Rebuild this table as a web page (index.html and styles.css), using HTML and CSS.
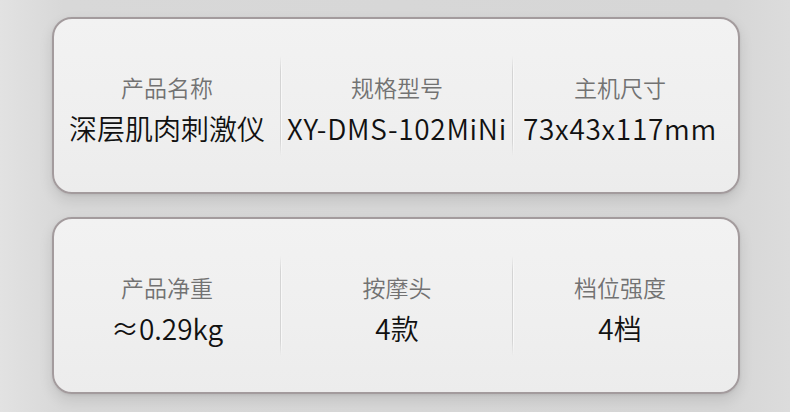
FILE: index.html
```html
<!DOCTYPE html>
<html lang="zh-CN">
<head>
  <meta charset="UTF-8" />
  <meta name="viewport" content="width=device-width, initial-scale=1.0"/>
  <title>产品参数</title>
  <link rel="stylesheet" href="styles.css">
</head>
<body>
  <div class="specs">
    <div class="card">
      <div class="spec">
        <div class="label">产品名称</div>
        <div class="value">深层肌肉刺激仪</div>
      </div>
      <div class="divider"></div>
      <div class="spec">
        <div class="label">规格型号</div>
        <div class="value value-latin">XY-DMS-102MiNi</div>
      </div>
      <div class="divider"></div>
      <div class="spec spec-last">
        <div class="label">主机尺寸</div>
        <div class="value value-latin">73x43x117mm</div>
      </div>
    </div>

    <div class="card">
      <div class="spec">
        <div class="label">产品净重</div>
        <div class="value">≈0.29kg</div>
      </div>
      <div class="divider"></div>
      <div class="spec">
        <div class="label">按摩头</div>
        <div class="value">4款</div>
      </div>
      <div class="divider"></div>
      <div class="spec spec-last">
        <div class="label">档位强度</div>
        <div class="value">4档</div>
      </div>
    </div>
  </div>
</body>
</html>
```

FILE: styles.css
```css
body {
  margin: 0;
  width: 790px;
  height: 412px;
  overflow: hidden;
  font-family: "Noto Sans CJK SC", "Noto Sans", sans-serif;
  background: linear-gradient(90deg, #e2e2e2 0%, #d8d8d8 8%, #d6d6d6 92%, #dcdcdc 100%);
}
.specs {
  padding: 17px 0 0 52px;
  display: flex;
  flex-direction: column;
  gap: 23px;
}
.card {
  width: 684px;
  height: 173px;
  background: linear-gradient(180deg, #f2f2f2 0%, #efefef 60%, #ececec 100%);
  border: 2px solid #a39b9d;
  border-radius: 20px;
  box-shadow: 0 6px 14px rgba(0,0,0,0.10), 0 1px 3px rgba(0,0,0,0.08);
  display: grid;
  grid-template-columns: 226px 2px 230px 2px 1fr;
  align-items: center;
}
.spec {
  display: flex;
  flex-direction: column;
  align-items: center;
  gap: 5px;
  padding-top: 5px;
  white-space: nowrap;
}
.spec-last {
  padding-right: 12px;
}
.label {
  font-size: 23px;
  line-height: 34px;
  font-weight: 350;
  color: #727272;
}
.value {
  font-size: 28px;
  line-height: 38px;
  font-weight: 350;
  color: #111;
}
.value-latin {
  letter-spacing: 0.7px;
}
.divider {
  height: 100px;
  background: linear-gradient(90deg, #d4d4d4 50%, #f8f8f8 50%);
  -webkit-mask: linear-gradient(180deg, transparent, #000 15%, #000 85%, transparent);
}
```
